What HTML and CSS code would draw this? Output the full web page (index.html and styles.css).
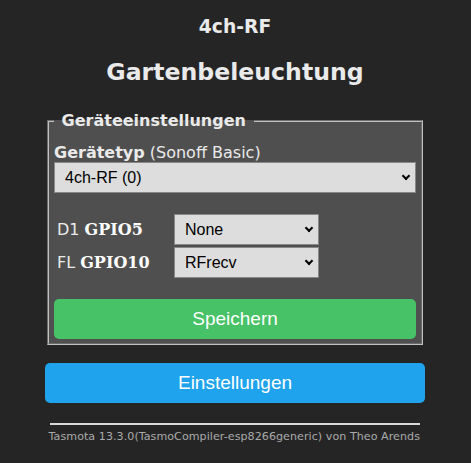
FILE: index.html
```html
<!DOCTYPE html>
<html lang="de">
<head>
    <meta charset="UTF-8">
    <meta name="viewport" content="width=device-width, initial-scale=1.0">
    <title>Gartenbeleuchtung - Geräteeinstellungen</title>
    <link rel="stylesheet" href="styles.css">
</head>
<body>
    <div class="page">
        <h3 class="device">4ch-RF</h3>
        <h2 class="title">Gartenbeleuchtung</h2>

        <fieldset class="module">
            <legend>&nbsp;Geräteeinstellungen&nbsp;</legend>
            <form class="module-form">
                <div class="module-label"><b>Gerätetyp</b> (Sonoff Basic)</div>
                <div class="select-wrap">
                    <select class="module-type">
                        <option>4ch-RF (0)</option>
                    </select>
                </div>

                <div class="gpio-list">
                    <div class="gpio-name">D1 <b>GPIO5</b></div>
                    <div class="select-wrap">
                        <select>
                            <option>None</option>
                        </select>
                    </div>
                    <div class="gpio-name">FL <b>GPIO10</b></div>
                    <div class="select-wrap">
                        <select>
                            <option>RFrecv</option>
                        </select>
                    </div>
                </div>

                <button type="submit" class="btn btn-save">Speichern</button>
            </form>
        </fieldset>

        <button type="button" class="btn btn-config">Einstellungen</button>

        <div class="footer">
            <hr>
            <span>Tasmota 13.3.0(TasmoCompiler-esp8266generic) von Theo Arends</span>
        </div>
    </div>
</body>
</html>
```

FILE: styles.css
```css
body {
    margin: 0;
    padding-right: 1px;
    background-color: #252525;
    color: #eaeaea;
    font-family: 'DejaVu Sans', Verdana, sans-serif;
    font-size: 16px;
}

.page {
    width: 380px;
    margin: 0 auto;
}

.device {
    margin: 16px 0 0;
    font-size: 18.72px;
    text-align: center;
}

.title {
    margin: 21px 0 0;
    font-size: 23.6px;
    text-align: center;
}

.module {
    margin: 25px 2px 0;
    padding: 0 5px 4px;
    background-color: #4f4f4f;
    border: 2px groove #c0c0c0;
}

.module legend {
    padding: 0 2px;
    font-weight: bold;
}

.module-form {
    padding-top: 13px;
}

.select-wrap {
    position: relative;
}

.select-wrap::after {
    content: '';
    position: absolute;
    right: 7px;
    top: 50%;
    width: 4px;
    height: 4px;
    margin-top: -5px;
    border-right: 2px solid #000;
    border-bottom: 2px solid #000;
    transform: rotate(45deg);
    pointer-events: none;
}

select {
    display: block;
    width: 100%;
    height: 31px;
    box-sizing: border-box;
    padding: 0 20px 0 10px;
    border: 1px solid #888;
    border-radius: 0;
    background-color: #dddddd;
    color: #000;
    font-family: 'Liberation Sans', Arial, sans-serif;
    font-size: 16px;
    appearance: none;
    -webkit-appearance: none;
}

.gpio-list {
    display: grid;
    grid-template-columns: 120px 145px;
    row-gap: 2px;
    align-items: center;
    margin-top: 21px;
}

.gpio-name {
    padding-left: 3px;
}

.gpio-name b {
    color: #fff;
    font-family: 'DejaVu Serif', serif;
}

.btn {
    display: block;
    width: 100%;
    height: 40px;
    border: 0;
    border-radius: 5px;
    color: #fff;
    font-family: 'Liberation Sans', Arial, sans-serif;
    font-size: 19px;
    line-height: 40px;
    padding: 0;
}

.btn-save {
    margin-top: 21px;
    background-color: #47c266;
}

.btn-config {
    margin-top: 18px;
    background-color: #1fa3ec;
}

.footer {
    padding-right: 5px;
    text-align: right;
    white-space: nowrap;
    font-size: 11.1px;
    letter-spacing: 0.05px;
    color: #aaa;
}

.footer hr {
    margin: 20px 0 5px 5px;
    height: 0;
    border: 0;
    border-top: 2px solid #d8d8d8;
}
```
